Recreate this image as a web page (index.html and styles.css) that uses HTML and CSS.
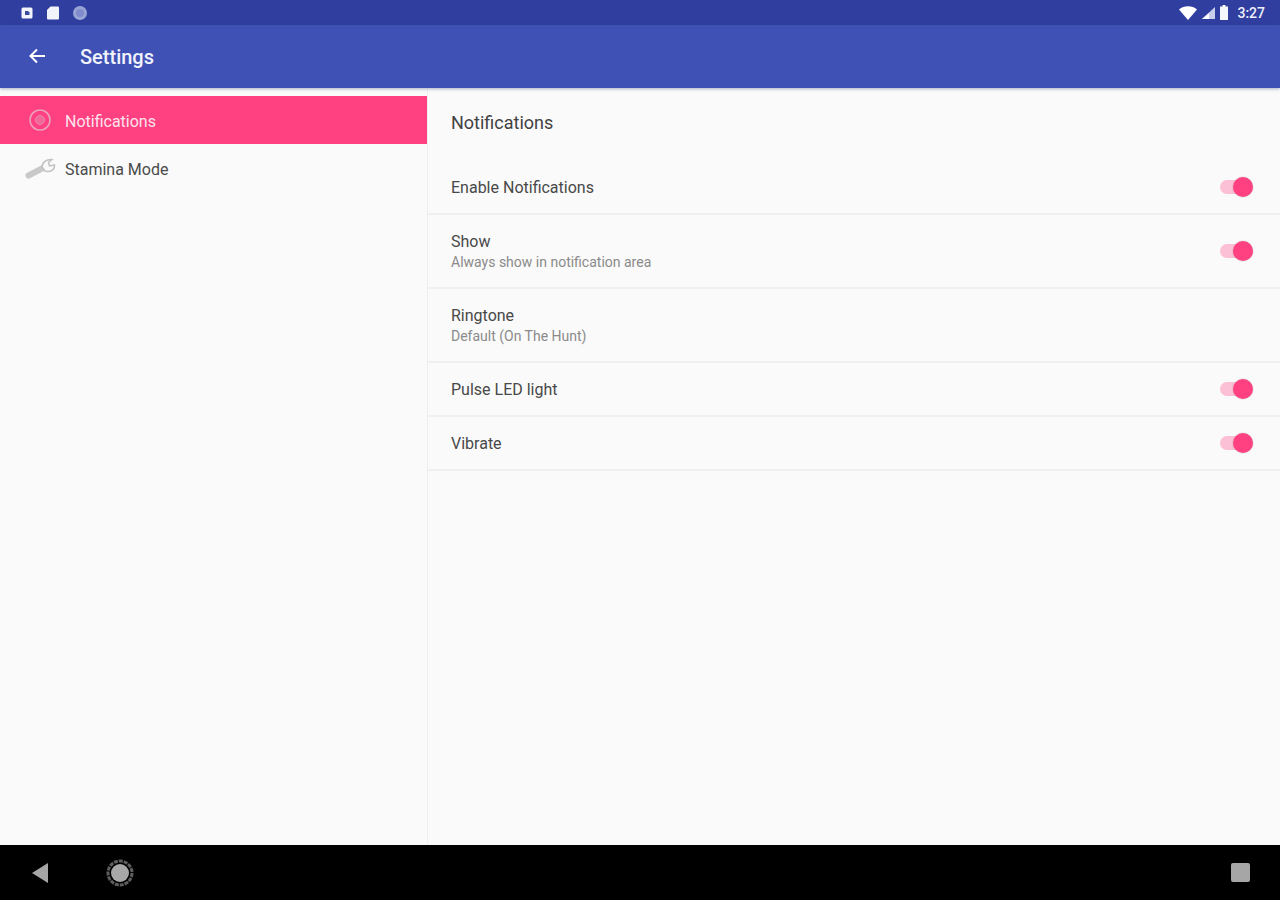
FILE: index.html
```html
<!DOCTYPE html>
<html lang="en">
<head>
  <meta charset="UTF-8" />
  <meta name="viewport" content="width=device-width, initial-scale=1.0"/>
  <title>Settings</title>
  <link rel="stylesheet" href="styles.css">
</head>
<body>

  <div class="status-bar">
    <div class="status-left">
      <svg width="14" height="14" viewBox="0 0 14 14"><rect x="1.500" y="1.500" width="11" height="11" rx="1.500" fill="#f2f4fb"/><path d="M5 5h3l1.500 1.500V9H5z" fill="#3a4a9c"/></svg>
      <svg width="14" height="16" viewBox="0 0 14 16"><path d="M4.500 1.500H12a1 1 0 0 1 1 1v11a1 1 0 0 1-1 1H2a1 1 0 0 1-1-1V5z" fill="#f2f4fb"/></svg>
      <svg width="16" height="16" viewBox="0 0 16 16"><circle cx="8" cy="8" r="7" fill="#98a4d6"/><circle cx="8" cy="8" r="4" fill="#7f8ccb"/></svg>
    </div>
    <div class="status-right">
      <svg width="18" height="14" viewBox="0 0 18 14"><path d="M0 3.500C5-.8 13-.8 18 3.500L9 14z" fill="#fff"/></svg>
      <svg width="14" height="14" viewBox="0 0 14 14"><path d="M14 1v12H1z" fill="#c9cfea"/><path d="M8 7v6H1z" fill="#fff"/></svg>
      <svg width="10" height="15" viewBox="0 0 10 15"><path d="M3.500 0h3v1.500H9V15H1V1.500h2.500z" fill="#f6f7fc"/></svg>
      <span class="clock">3:27</span>
    </div>
  </div>

  <header class="app-bar">
    <svg class="back" width="18" height="16" viewBox="0 0 18 16"><path d="M17 8H3M9 1.500 2.500 8 9 14.500" fill="none" stroke="#fff" stroke-width="2"/></svg>
    <h1>Settings</h1>
  </header>

  <main class="content">
    <nav class="sidebar">
      <div class="side-item selected">
        <svg class="side-icon" width="26" height="26" viewBox="0 0 26 26"><circle cx="13" cy="13" r="10" fill="none" stroke="#eba0bb" stroke-width="1.600"/><circle cx="13" cy="13" r="4.500" fill="#f0699a" stroke="#e88aad"/></svg>
        <span>Notifications</span>
      </div>
      <div class="side-item">
        <svg class="side-icon" width="32" height="24" viewBox="0 0 32 24"><path d="M3.500 18.500 18 11" stroke="#c9c9c9" stroke-width="6" stroke-linecap="round"/><path d="M17 10c0-4.500 4.500-8 10-7.500L23.500 5.500l1 3.500 5-1c.5 4.500-4 8-9.500 6z" fill="#fafafa" stroke="#c2c2c2" stroke-width="1.500"/></svg>
        <span>Stamina Mode</span>
      </div>
    </nav>

    <section class="panel">
      <h2>Notifications</h2>

      <div class="row short">
        <div class="row-text"><div class="row-title">Enable Notifications</div></div>
        <div class="switch"><div class="knob"></div></div>
      </div>
      <div class="row tall">
        <div class="row-text">
          <div class="row-title">Show</div>
          <div class="row-sub">Always show in notification area</div>
        </div>
        <div class="switch"><div class="knob"></div></div>
      </div>
      <div class="row tall">
        <div class="row-text">
          <div class="row-title">Ringtone</div>
          <div class="row-sub">Default (On The Hunt)</div>
        </div>
      </div>
      <div class="row short">
        <div class="row-text"><div class="row-title">Pulse LED light</div></div>
        <div class="switch"><div class="knob"></div></div>
      </div>
      <div class="row short">
        <div class="row-text"><div class="row-title">Vibrate</div></div>
        <div class="switch"><div class="knob"></div></div>
      </div>
    </section>
  </main>

  <footer class="nav-bar">
    <div class="nav-left">
      <svg width="18" height="22" viewBox="0 0 18 22"><path d="M17 1v20L1 11z" fill="#a6a6a6"/></svg>
      <svg width="30" height="30" viewBox="0 0 30 30"><circle cx="15" cy="15" r="12" fill="none" stroke="#5e5e5e" stroke-width="3" stroke-dasharray="4 1"/><circle cx="15" cy="15" r="9" fill="#a8a8a8"/></svg>
    </div>
    <div class="nav-square"></div>
  </footer>

</body>
</html>
```

FILE: styles.css
```css
* {
  box-sizing: border-box;
}

html, body {
  height: 100%;
}

body {
  margin: 0;
  height: 900px;
  overflow: hidden;
  display: flex;
  flex-direction: column;
  font-family: Roboto, "Liberation Sans", sans-serif;
  background-color: #fafafa;
  color: #3a3a3a;
}

.status-bar {
  height: 25px;
  flex: none;
  display: flex;
  justify-content: space-between;
  align-items: center;
  padding: 0 15px 0 20px;
  background-color: #303f9f;
}

.status-left {
  display: flex;
  align-items: center;
  gap: 12px;
}

.status-right {
  display: flex;
  align-items: center;
  gap: 4px;
}

.clock {
  margin-left: 4px;
  color: #eef0f9;
  font-size: 14px;
  font-weight: 500;
}

.app-bar {
  height: 63px;
  flex: none;
  display: flex;
  align-items: center;
  padding: 0 0 0 28px;
  background-color: #3f51b5;
  box-shadow: 0 1px 3px rgba(30,40,110,0.35);
  position: relative;
}

.back {
  margin-right: 34px;
  margin-bottom: 2px;
}

h1 {
  margin: 0;
  color: #f1f3fb;
  font-size: 20px;
  font-weight: 500;
}

.content {
  flex: 1;
  display: flex;
  min-height: 0;
}

.sidebar {
  width: 428px;
  flex: none;
  padding-top: 8px;
  border-right: 1px solid #efefef;
}

.side-item {
  height: 48px;
  margin-bottom: 1px;
  position: relative;
  display: flex;
  align-items: center;
  padding-left: 65px;
  font-size: 16px;
  color: #4a4a4a;
}

.side-item.selected {
  padding-top: 2px;
  background-color: #ff4081;
  color: #fde3ec;
}

.side-icon {
  position: absolute;
  left: 27px;
  top: 11px;
}

.side-item:not(.selected) .side-icon {
  left: 25px;
  top: 12px;
}

.panel {
  flex: 1;
}

h2 {
  margin: 0;
  height: 73px;
  padding: 24px 0 0 23px;
  font-size: 18px;
  font-weight: 400;
  line-height: 22px;
  color: #424242;
}

.row {
  display: flex;
  justify-content: space-between;
  align-items: center;
  padding: 0 30px 0 23px;
  border-bottom: 2px solid #f0f0f0;
}

.row.short {
  height: 54px;
}

.row.tall {
  height: 74px;
}

.row-text {
  padding-top: 2px;
}

.row-title {
  font-size: 16px;
  line-height: 20px;
  color: #484848;
}

.row-sub {
  font-size: 14px;
  line-height: 21px;
  color: #8a8a8a;
}

.switch {
  position: relative;
  width: 30px;
  height: 14px;
  border-radius: 7px;
  background-color: #fbc0d5;
}

.knob {
  position: absolute;
  right: -3px;
  top: -3px;
  width: 20px;
  height: 20px;
  border-radius: 50%;
  background-color: #ff4081;
  box-shadow: 0 0 2px rgba(0,0,0,0.2);
}

.nav-bar {
  height: 55px;
  flex: none;
  display: flex;
  justify-content: space-between;
  align-items: center;
  padding: 0 30px 0 31px;
  background-color: #000;
}

.nav-left {
  display: flex;
  align-items: center;
  gap: 56px;
}

.nav-square {
  width: 19px;
  height: 19px;
  border-radius: 2px;
  background-color: #a6a6a6;
}
```
